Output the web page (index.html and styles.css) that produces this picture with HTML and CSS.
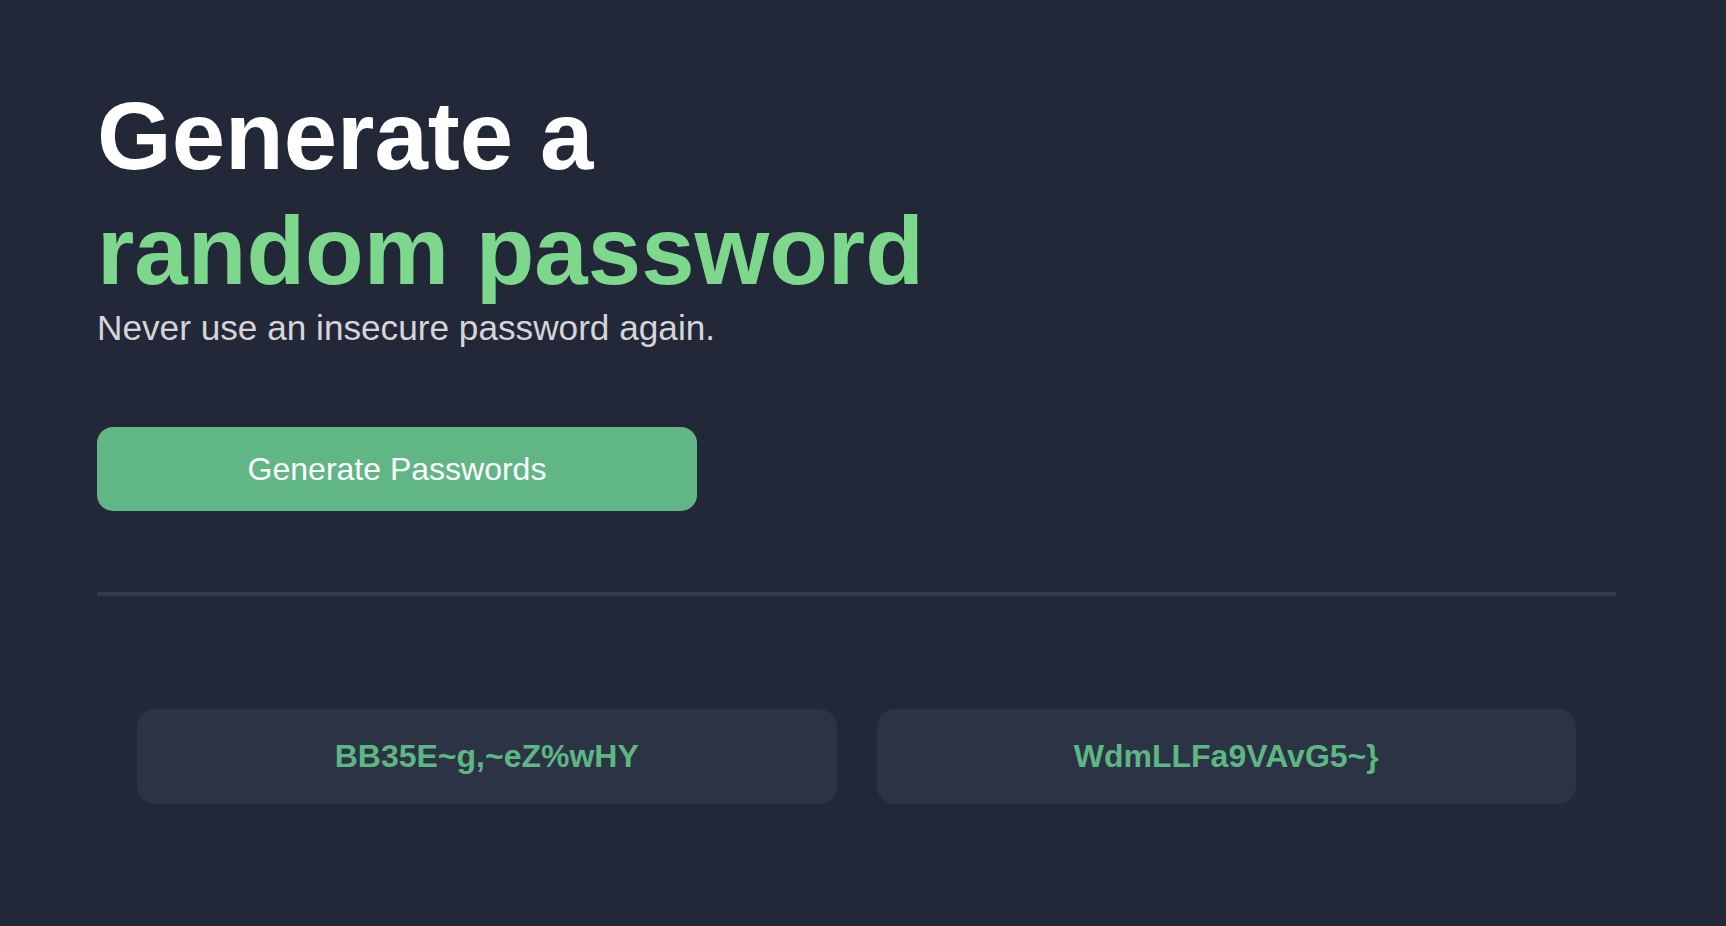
FILE: index.html
```html
<!DOCTYPE html>
<html lang="en">
<head>
<meta charset="utf-8">
<title>Password Generator</title>
<link rel="stylesheet" href="styles.css">
</head>
<body>
<main class="container">
  <h1 class="title">Generate a<br><span class="accent">random password</span></h1>
  <p class="subtitle">Never use an insecure password again.</p>
  <button class="generate-btn" type="button">Generate Passwords</button>
  <hr class="divider">
  <section class="passwords">
    <div class="password-box">BB35E~g,~eZ%wHY</div>
    <div class="password-box">WdmLLFa9VAvG5~}</div>
  </section>
</main>
</body>
</html>
```

FILE: styles.css
```css
html, body {
  margin: 0;
  padding: 0;
}

body {
  background: #232838;
  font-family: "Liberation Sans", Arial, sans-serif;
  min-height: 926px;
}

.container {
  width: 1519px;
  padding: 78px 0 0 97px;
  box-sizing: content-box;
}

.title {
  margin: 0;
  font-size: 96px;
  line-height: 1.2;
  font-weight: 700;
  color: #ffffff;
}

.accent {
  color: #7dd88d;
}

.subtitle {
  margin: 0;
  font-size: 35.2px;
  color: #d5d5d9;
}

.generate-btn {
  display: block;
  margin-top: 79px;
  width: 600px;
  height: 84px;
  border: none;
  border-radius: 16px;
  background: #61b686;
  color: #ffffff;
  font-family: "Liberation Sans", Arial, sans-serif;
  font-size: 32px;
  cursor: pointer;
}

.divider {
  margin: 81px 0 0;
  border: none;
  height: 4px;
  background: #343b4e;
}

.passwords {
  display: grid;
  grid-template-columns: 1fr 1fr;
  gap: 40px;
  padding: 0 40px;
  margin-top: 113px;
}

.password-box {
  height: 95px;
  display: flex;
  align-items: center;
  justify-content: center;
  background: #2b3345;
  border-radius: 18px;
  color: #5cb782;
  font-size: 32px;
  font-weight: 700;
}
```
